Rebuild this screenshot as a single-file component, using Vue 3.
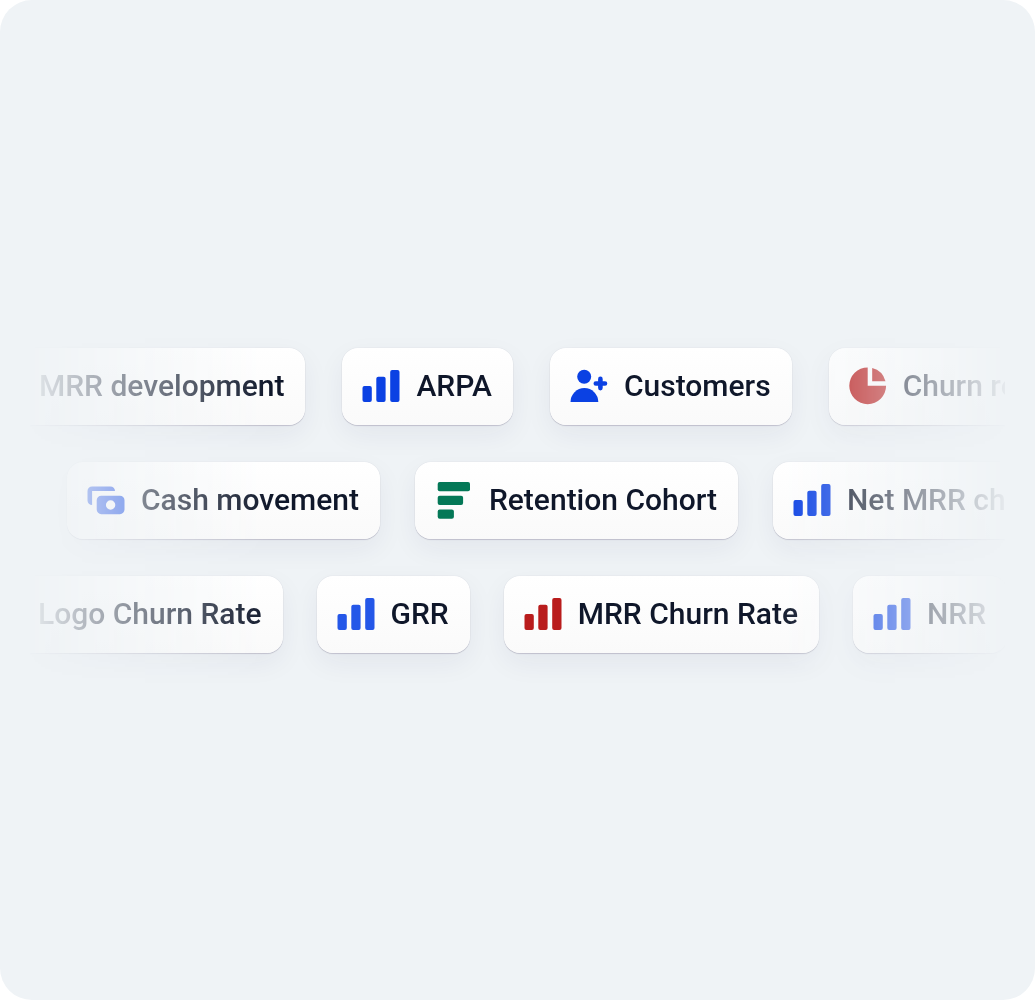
<script setup>
const rows = [
  {
    name: 'first',
    metrics: [
      { label: 'MRR development', icon: 'bars', color: 'blue' },
      { label: 'ARPA', icon: 'bars', color: 'blue' },
      { label: 'Customers', icon: 'customers', color: 'blue' },
      { label: 'Churn reasons', icon: 'pie', color: 'red' }
    ]
  },
  {
    name: 'second',
    metrics: [
      { label: 'Cash movement', icon: 'cash', color: 'blue' },
      { label: 'Retention Cohort', icon: 'cohort', color: 'green' },
      { label: 'Net MRR churn', icon: 'bars', color: 'blue' }
    ]
  },
  {
    name: 'third',
    metrics: [
      { label: 'Logo Churn Rate', icon: 'bars', color: 'red' },
      { label: 'GRR', icon: 'bars', color: 'light-blue' },
      { label: 'MRR Churn Rate', icon: 'bars', color: 'red' },
      { label: 'NRR', icon: 'bars', color: 'blue' }
    ]
  }
];
</script>

<template>
  <main class="panel">
    <div class="lanes">
      <ul v-for="row in rows" :key="row.name" class="lane" :class="row.name">
        <li v-for="metric in row.metrics" :key="metric.label" class="metric">
          <svg class="icon" :class="metric.color" viewBox="0 0 38 38" aria-hidden="true">
            <g v-if="metric.icon === 'bars'">
              <rect x="0.5" y="19" width="9.3" height="16" rx="2" />
              <rect x="14.3" y="9.8" width="9.3" height="25.2" rx="2" />
              <rect x="28.2" y="3" width="9.3" height="32" rx="2" />
            </g>
            <g v-else-if="metric.icon === 'customers'">
              <circle cx="14.2" cy="9.8" r="7" />
              <path d="M0.5 35a13.9 13.9 0 0 1 27.8 0z" />
              <path class="plus" d="M30.4 11.9v9.2M25.8 16.5h9.2" />
            </g>
            <g v-else-if="metric.icon === 'pie'">
              <path d="M18.7 0.4A18.4 18.4 0 1 0 37.1 18.8H18.7z" />
              <path d="M23.2 1A18.4 18.4 0 0 1 36.5 14.3H23.2z" />
            </g>
            <g v-else-if="metric.icon === 'cash'">
              <path d="M5.1 5.5H23.4a4.6 4.6 0 0 1 4.6 4.6H5.1V24a4.6 4.6 0 0 1-4.6-4.6V10.1a4.6 4.6 0 0 1 4.6-4.6z" />
              <path
                fill-rule="evenodd"
                d="M14.3 14.7h18.6a4.6 4.6 0 0 1 4.6 4.6v9.3a4.6 4.6 0 0 1-4.6 4.6H14.3a4.6 4.6 0 0 1-4.6-4.6v-9.3a4.6 4.6 0 0 1 4.6-4.6zM23.6 19.3a4.7 4.7 0 1 0 0 9.4 4.7 4.7 0 0 0 0-9.4z"
              />
            </g>
            <g v-else>
              <rect x="2.7" y="1" width="32.3" height="9.2" rx="2" />
              <rect x="2.7" y="14.8" width="25.4" height="9.2" rx="2" />
              <rect x="2.7" y="28.6" width="16.2" height="9.2" rx="2" />
            </g>
          </svg>
          <span>{{ metric.label }}</span>
        </li>
      </ul>
    </div>
  </main>
</template>

<style>
body {
  margin: 0;
  background: #ffffff;
}
</style>

<style scoped>
.panel {
  display: flex;
  flex-direction: column;
  justify-content: center;
  box-sizing: border-box;
  min-height: 100vh;
  padding: 0 30px;
  border-radius: 32px;
  background: #eff3f6;
  font-family: Roboto, "Liberation Sans", sans-serif;
}

.lanes {
  display: flex;
  flex-direction: column;
  gap: 37px;
  padding: 48px 0;
  overflow: hidden;
  -webkit-mask-image: linear-gradient(to right, rgba(0, 0, 0, 0.04), #000 240px, #000 calc(100% - 230px), rgba(0, 0, 0, 0.04));
  mask-image: linear-gradient(to right, rgba(0, 0, 0, 0.04), #000 240px, #000 calc(100% - 230px), rgba(0, 0, 0, 0.04));
}

.lane {
  display: flex;
  margin: 0;
  padding: 0;
  list-style: none;
}

.first {
  gap: 37px;
  margin-left: -65px;
}

.second {
  gap: 35px;
  margin-left: 37px;
}

.third {
  gap: 34px;
  margin-left: -66px;
}

.metric {
  display: flex;
  flex: none;
  align-items: center;
  gap: 16px;
  box-sizing: border-box;
  height: 77px;
  padding: 0 21px 0 20px;
  border-radius: 16px;
  background: linear-gradient(#ffffff, #fafafa);
  box-shadow:
    0 0 1px rgba(40, 30, 70, 0.24),
    0 1px 1px rgba(40, 30, 70, 0.18),
    0 10px 28px rgba(40, 30, 90, 0.06);
  color: #0f172a;
  font-size: 30px;
  font-weight: 500;
  line-height: 40px;
  white-space: nowrap;
}

.icon {
  flex: none;
  width: 38px;
  height: 38px;
  fill: currentColor;
}

.plus {
  fill: none;
  stroke: currentColor;
  stroke-width: 4.6;
  stroke-linecap: round;
}

.blue {
  color: #0b41e3;
}

.light-blue {
  color: #2457e8;
}

.red {
  color: #b91c1c;
}

.green {
  color: #047857;
}
</style>
